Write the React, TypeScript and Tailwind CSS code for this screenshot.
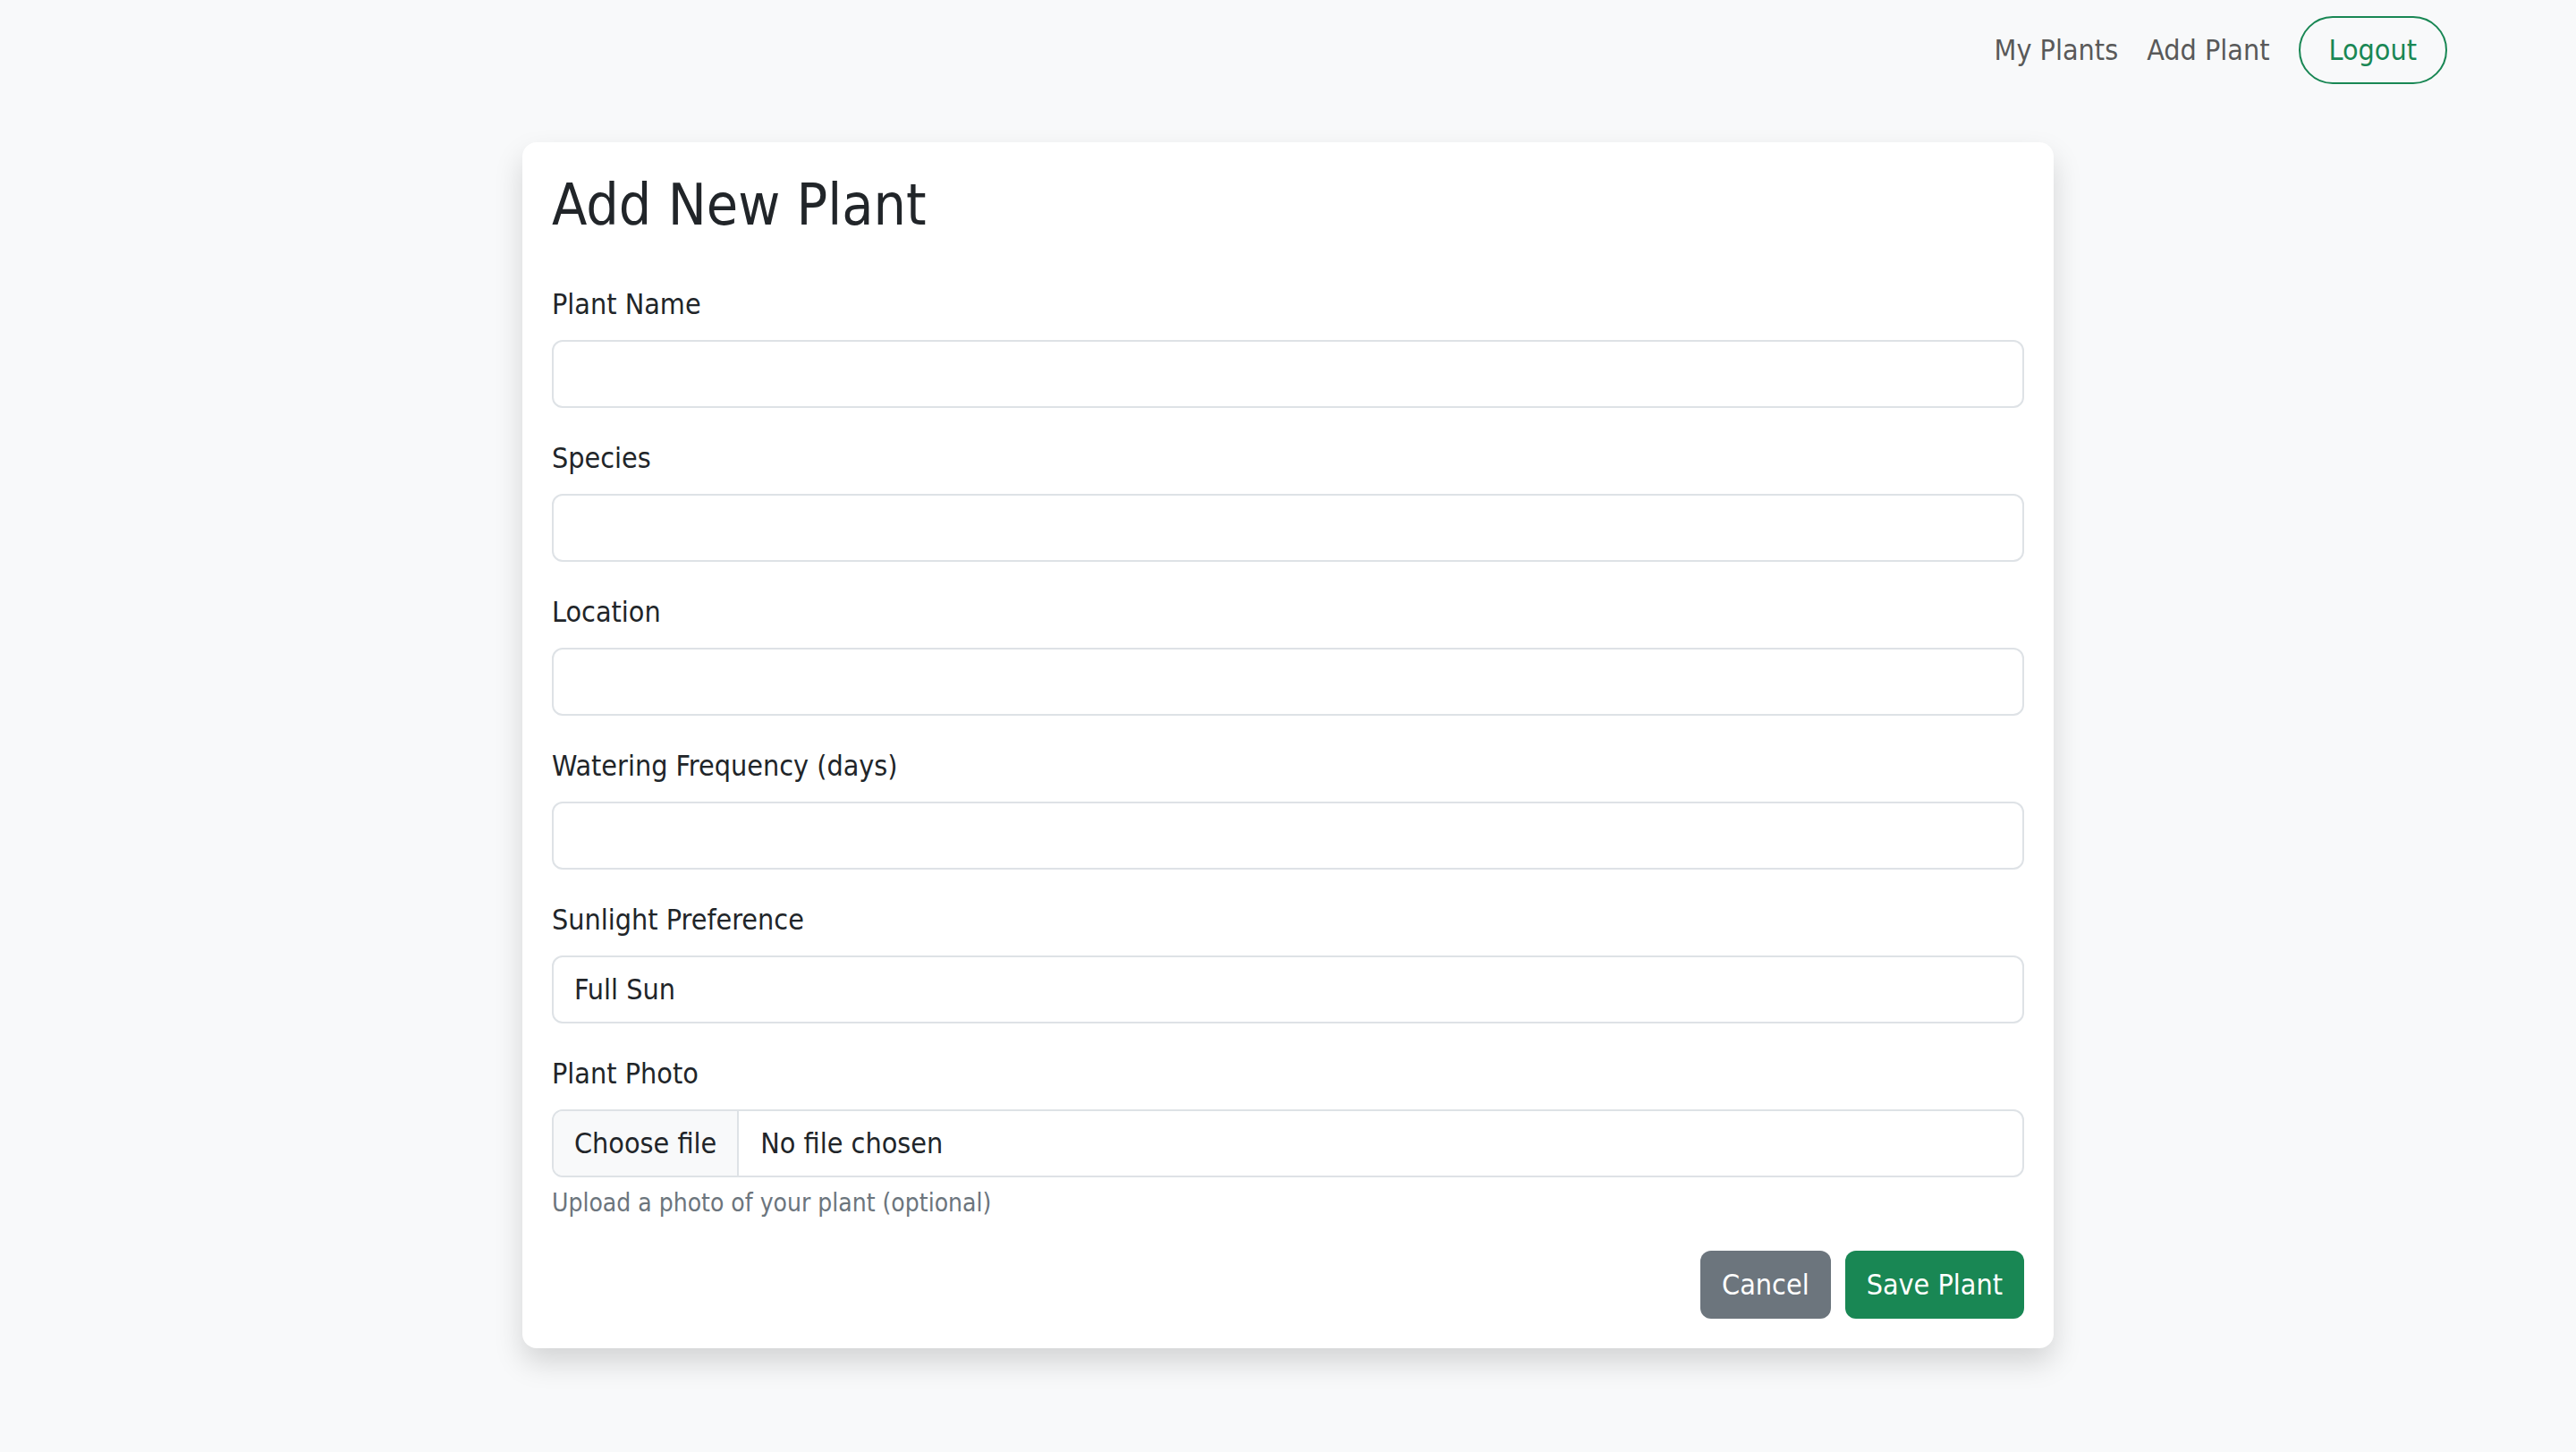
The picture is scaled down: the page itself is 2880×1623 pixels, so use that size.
import React from "react";

const fields = [
  { id: "name", label: "Plant Name", value: "" },
  { id: "species", label: "Species", value: "" },
  { id: "location", label: "Location", value: "" },
  { id: "watering", label: "Watering Frequency (days)", value: "" },
  { id: "sunlight", label: "Sunlight Preference", value: "Full Sun" },
];

const NavBar = () => (
  <nav className="h-[112px] w-[2640px] mx-auto px-[24px] flex items-center justify-end">
    <a className="px-[16px] leading-[48px] text-[32px] text-[#595959]">My Plants</a>
    <a className="px-[16px] leading-[48px] text-[32px] text-[#595959]">Add Plant</a>
    <button className="ml-[16px] h-[76px] px-[32px] rounded-full border-2 border-[#198754] text-[32px] leading-[48px] text-[#198754]">
      Logout
    </button>
  </nav>
);

export default function App() {
  return (
    <div className="min-h-screen bg-[#f8f9fa] text-[#212529] font-[DejaVu_Sans_Condensed,DejaVu_Sans,sans-serif] [font-stretch:condensed]">
      <NavBar />
      <main className="mt-[47px] w-[1712px] mx-auto bg-white rounded-[16px] shadow-[0_16px_32px_rgba(0,0,0,0.15)] px-[33px] pt-[32px] pb-[33px]">
        <h2 className="text-[64px] leading-[1.2] mb-[48px]">Add New Plant</h2>

        {fields.map((field) => (
          <div key={field.id} className="mb-[32px]">
            <label className="block text-[32px] leading-[48px] mb-[16px]">{field.label}</label>
            <div className="h-[76px] flex items-center border-2 border-[#dee2e6] rounded-[12px] bg-white px-[23px] text-[32px] leading-[48px]">
              {field.value}
            </div>
          </div>
        ))}

        <div className="mb-[32px]">
          <label className="block text-[32px] leading-[48px] mb-[16px]">Plant Photo</label>
          <div className="h-[76px] flex items-stretch border-2 border-[#dee2e6] rounded-[12px] bg-white overflow-hidden text-[32px] leading-[48px]">
            <span className="flex items-center bg-[#f8f9fa] px-[23px] border-r-2 border-[#dee2e6]">Choose file</span>
            <span className="flex items-center px-[24px]">No file chosen</span>
          </div>
          <p className="mt-[8px] text-[28px] leading-[42px] text-[#6c757d]">Upload a photo of your plant (optional)</p>
        </div>

        <div className="flex justify-end gap-[16px]">
          <button className="h-[76px] px-[24px] rounded-[12px] bg-[#6c757d] text-white text-[32px] leading-[48px]">
            Cancel
          </button>
          <button className="h-[76px] px-[24px] rounded-[12px] bg-[#198754] text-white text-[32px] leading-[48px]">
            Save Plant
          </button>
        </div>
      </main>
    </div>
  );
}
